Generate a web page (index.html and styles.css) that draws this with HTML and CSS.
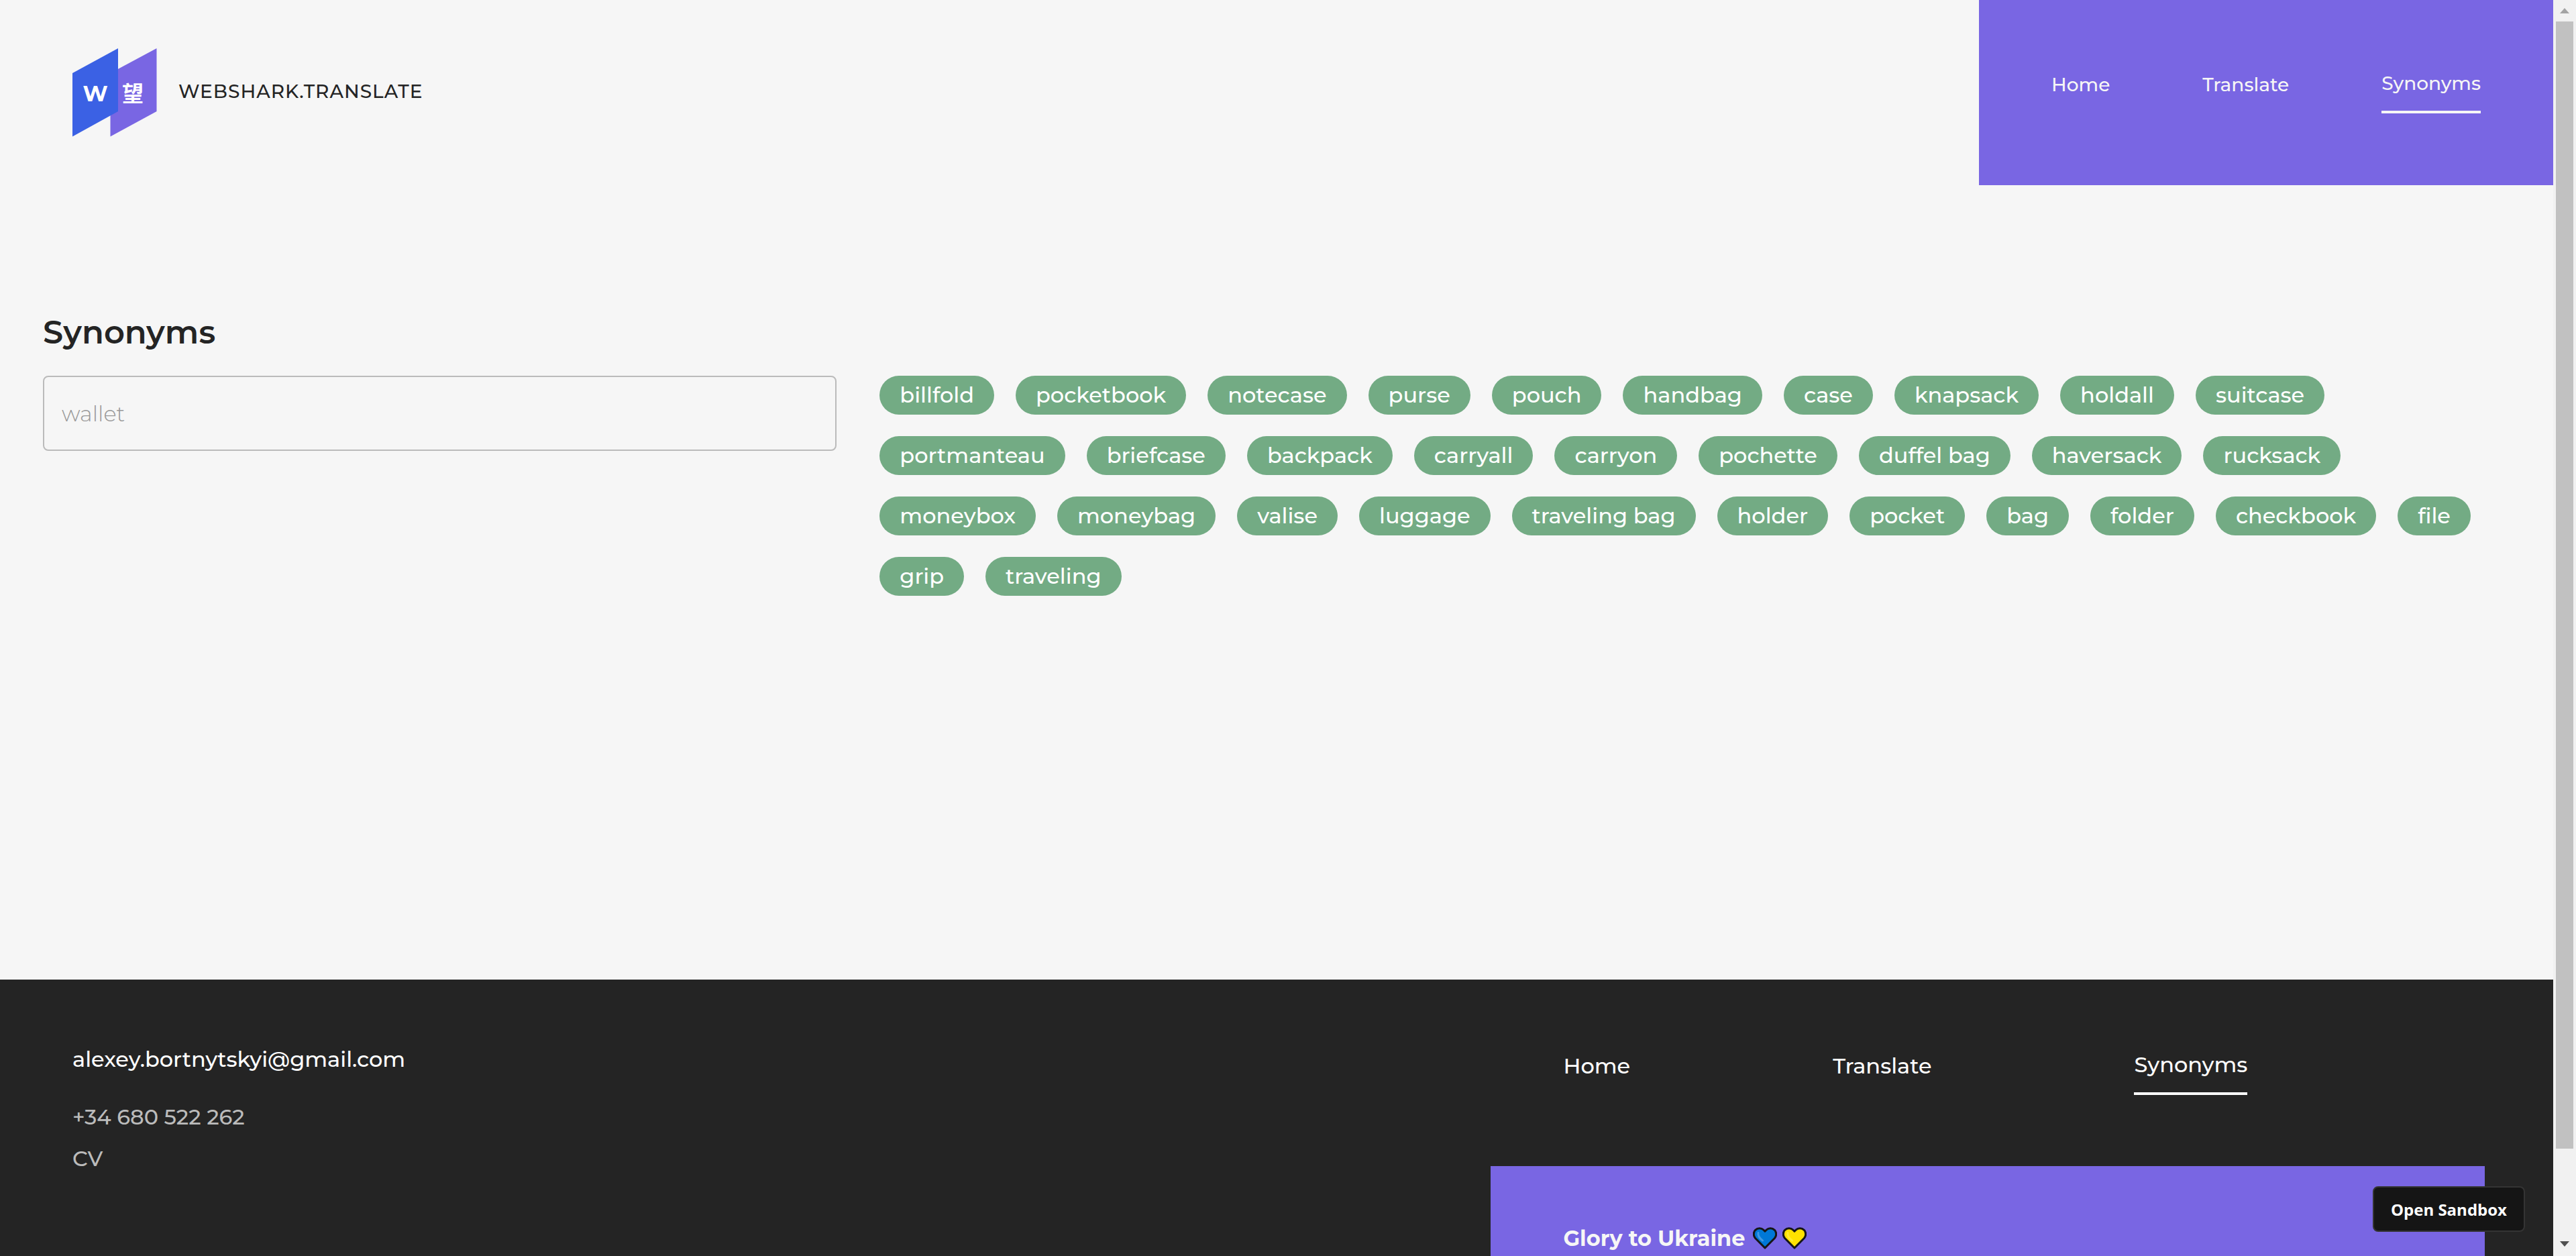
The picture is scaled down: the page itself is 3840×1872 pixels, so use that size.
FILE: index.html
```html
<!DOCTYPE html>
<html lang="en">
<head>
<meta charset="utf-8">
<meta name="viewport" content="width=device-width, initial-scale=1">
<title>Webshark.Translate - Synonyms</title>
<link rel="stylesheet" href="styles.css">
</head>
<body>
<div class="app">
  <div class="page">
    <header class="header">
      <a class="brand" href="#home">
        <svg class="brand-logo" viewBox="0 0 126 132" role="img" aria-label="Webshark logo">
          <polygon class="logo-back" points="56.5,37 125.5,0 125.5,94 56.5,131.5"/>
          <polygon class="logo-front" points="0,37 68,0 68,94 0,131.5"/>
          <text class="logo-latin" x="34" y="79" text-anchor="middle">W</text>
          <text class="logo-han" x="90" y="79" text-anchor="middle">望</text>
        </svg>
        <span class="brand-name">WEBSHARK.TRANSLATE</span>
      </a>
      <nav class="nav header-nav" aria-label="Main">
        <a class="nav-link" href="#home">Home</a>
        <a class="nav-link" href="#translate">Translate</a>
        <a class="nav-link is-active" href="#synonyms" aria-current="page">Synonyms</a>
      </nav>
    </header>

    <main class="main">
      <h1 class="title"><label for="word">Synonyms</label></h1>
      <div class="layout">
        <input class="word-input" id="word" type="text" placeholder="wallet">
        <ul class="chips">
          <li class="chip">billfold</li>
          <li class="chip">pocketbook</li>
          <li class="chip">notecase</li>
          <li class="chip">purse</li>
          <li class="chip">pouch</li>
          <li class="chip">handbag</li>
          <li class="chip">case</li>
          <li class="chip">knapsack</li>
          <li class="chip">holdall</li>
          <li class="chip">suitcase</li>
          <li class="chip">portmanteau</li>
          <li class="chip">briefcase</li>
          <li class="chip">backpack</li>
          <li class="chip">carryall</li>
          <li class="chip">carryon</li>
          <li class="chip">pochette</li>
          <li class="chip">duffel bag</li>
          <li class="chip">haversack</li>
          <li class="chip">rucksack</li>
          <li class="chip">moneybox</li>
          <li class="chip">moneybag</li>
          <li class="chip">valise</li>
          <li class="chip">luggage</li>
          <li class="chip">traveling bag</li>
          <li class="chip">holder</li>
          <li class="chip">pocket</li>
          <li class="chip">bag</li>
          <li class="chip">folder</li>
          <li class="chip">checkbook</li>
          <li class="chip">file</li>
          <li class="chip">grip</li>
          <li class="chip">traveling</li>
        </ul>
      </div>
    </main>

    <footer class="footer">
      <address class="contacts">
        <a class="contact contact-email" href="mailto:alexey.bortnytskyi@gmail.com">alexey.bortnytskyi@gmail.com</a>
        <a class="contact" href="tel:+34680522262">+34 680 522 262</a>
        <a class="contact" href="#cv">CV</a>
      </address>
      <div class="footer-side">
        <nav class="nav footer-nav" aria-label="Footer">
          <a class="nav-link" href="#home">Home</a>
          <a class="nav-link" href="#translate">Translate</a>
          <a class="nav-link is-active" href="#synonyms" aria-current="page">Synonyms</a>
        </nav>
        <div class="glory">
          <span>Glory to Ukraine</span>
          <span class="hearts">
            <svg class="heart heart-blue" viewBox="0 0 36 33" aria-hidden="true">
              <path class="heart-shape" d="M18 31 3.600 16.500C.5 13 .5 7.500 3.600 4.300 7.200.8 12.500.8 15.800 4L18 6.200 20.200 4C23.500.8 28.800.8 32.400 4.300 35.500 7.500 35.500 13 32.400 16.500Z"/>
              <path class="heart-shine" d="M8 8.500C7 12.500 10 16.500 14.500 20"/>
            </svg>
            <svg class="heart heart-yellow" viewBox="0 0 36 33" aria-hidden="true">
              <path class="heart-shape" d="M18 31 3.600 16.500C.5 13 .5 7.500 3.600 4.300 7.200.8 12.500.8 15.800 4L18 6.200 20.200 4C23.500.8 28.800.8 32.400 4.300 35.500 7.500 35.500 13 32.400 16.500Z"/>
              <path class="heart-shine" d="M8 8.500C7 12.500 10 16.500 14.500 20"/>
            </svg>
          </span>
        </div>
      </div>
    </footer>
  </div>

  <div class="scrollbar" aria-hidden="true">
    <svg class="scroll-arrow scroll-up" viewBox="0 0 14 8"><polygon points="7,0 14,8 0,8"/></svg>
    <div class="scroll-track"><div class="scroll-thumb"></div></div>
    <svg class="scroll-arrow scroll-down" viewBox="0 0 14 8"><polygon points="0,0 14,0 7,8"/></svg>
  </div>
  <button class="sandbox-button" type="button">Open Sandbox</button>
</div>
</body>
</html>
```
FILE: styles.css
```css
:root {
  --bg: #f6f6f6;
  --dark: #242424;
  --violet: #7966e3;
  --blue: #3b61e4;
  --green: #73ab84;
  --muted: #bbbbbb;
}

* { box-sizing: border-box; }

body {
  margin: 0;
  background: var(--bg);
  color: var(--dark);
  font-family: Montserrat, Inter, sans-serif;
  font-size: 32px;
  font-weight: 500;
}

a { color: inherit; text-decoration: none; }

.app {
  display: flex;
  height: 100vh;
  overflow: hidden;
}

.page { flex: 1; min-width: 0; overflow: hidden; }

/* Header */
.header { display: flex; justify-content: space-between; }

.brand {
  display: flex;
  align-items: center;
  gap: 32px;
  padding: 72px 108px;
}
.brand-logo { width: 126px; height: 132px; }
.brand-name {
  padding-bottom: 4px;
  font-size: 28px;
  letter-spacing: 1px;
}
.logo-back { fill: var(--violet); }
.logo-front { fill: var(--blue); }
.logo-latin, .logo-han { fill: #fff; font-size: 32px; font-weight: 700; }
.logo-han { font-family: "Noto Sans CJK SC", sans-serif; }

.nav { display: flex; align-items: center; color: var(--bg); }
.nav-link { padding-bottom: 24px; }
.nav-link.is-active { border-bottom: 4px solid currentColor; }

.header-nav {
  gap: 138px;
  padding: 0 108px;
  background: var(--violet);
  font-size: 28px;
}

/* Synonyms */
.main {
  min-height: calc(100vh - 688px);
  padding: 190px 64px 64px;
}
.title { margin: 0 0 35px; font-size: 48px; font-weight: 600; line-height: 59px; }
.layout {
  display: grid;
  grid-template-columns: repeat(12, 1fr);
  gap: 64px;
  align-items: start;
}
.word-input {
  grid-column: span 4;
  width: 100%;
  height: 112px;
  padding: 0 26px;
  border: 2px solid var(--muted);
  border-radius: 8px;
  background: transparent;
  color: var(--dark);
  font: inherit;
  font-weight: 300;
}
.word-input::placeholder { color: #999; opacity: 1; }
.chips {
  grid-column: span 8;
  display: flex;
  flex-wrap: wrap;
  gap: 32px;
  margin: 0;
  padding: 0;
  list-style: none;
}
.chip {
  padding: 0 30px;
  border-radius: 32px;
  background: var(--green);
  color: #fff;
  line-height: 58px;
}

/* Footer */
.footer {
  display: flex;
  justify-content: space-between;
  padding-right: 102px;
  background: var(--dark);
}
.contacts {
  display: flex;
  flex-direction: column;
  align-items: flex-start;
  gap: 23px;
  padding: 99px 108px;
  font-style: normal;
}
.contact { color: var(--muted); line-height: 39px; }
.contact-email { margin-bottom: 24px; color: #fff; }

.footer-side { flex: 0 0 40%; }
.footer-nav { gap: 302px; padding: 107px 108px 106px; color: #fff; }
.footer-nav .nav-link { padding-bottom: 22px; }
.glory {
  display: flex;
  align-items: center;
  gap: 12px;
  padding: 88px 108px;
  background: var(--violet);
  color: var(--bg);
  font-weight: 700;
  line-height: 39px;
}
.hearts { display: flex; gap: 8px; }
.heart { width: 36px; height: 33px; }
.heart-shape { stroke: #161616; stroke-width: 3; stroke-linejoin: round; }
.heart-shine { fill: none; stroke-width: 3; stroke-linecap: round; }
.heart-blue .heart-shape { fill: #0078d7; }
.heart-blue .heart-shine { stroke: #3f98e2; }
.heart-yellow .heart-shape { fill: #ffe100; }
.heart-yellow .heart-shine { stroke: #ffea2e; }

/* Scrollbar */
.scrollbar {
  display: flex;
  flex-direction: column;
  align-items: center;
  flex: 0 0 34px;
  padding: 12px 4px 14px;
  background: #f1f1f1;
}
.scroll-arrow { flex: none; width: 14px; height: 8px; }
.scroll-up { fill: #a3a3a3; }
.scroll-down { fill: #505050; }
.scroll-track { flex: 1; align-self: stretch; padding: 12px 0; }
.scroll-thumb { height: 93%; background: #c1c1c1; }

.sandbox-button {
  position: fixed;
  right: 76px;
  bottom: 36px;
  height: 68px;
  padding: 0 25px;
  border: 2px solid #343434;
  border-radius: 8px;
  background: #151515;
  color: #fff;
  font-family: "Open Sans", "Noto Sans", sans-serif;
  font-size: 24px;
  font-weight: 700;
}
```
